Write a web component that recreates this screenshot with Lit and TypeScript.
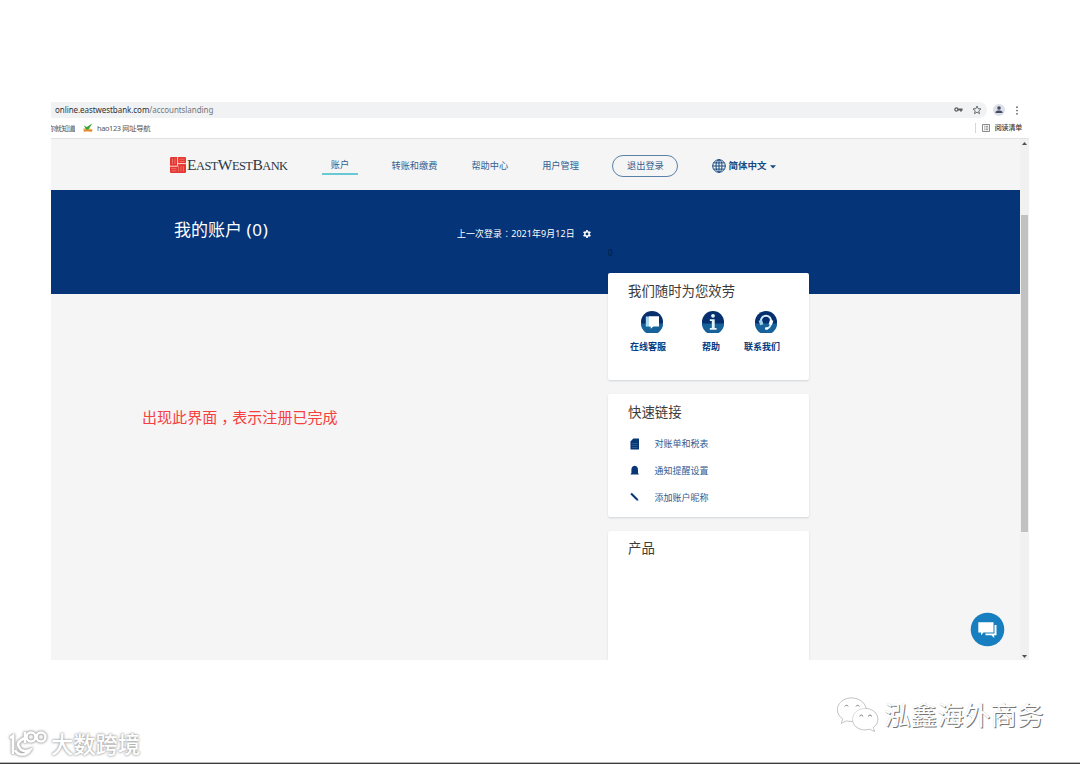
import { LitElement, html, css, svg } from "lit";
import { customElement } from "lit/decorators.js";

const globe = svg`<g fill="none" stroke="#16497f" stroke-width="1"><circle cx="7" cy="7" r="6.3"/><ellipse cx="7" cy="7" rx="3" ry="6.3"/><path d="M7 .7v12.6M.7 7h12.6M1.6 3.9h10.8M1.6 10.1h10.8"/></g>`;

@customElement("app-root")
export class AppRoot extends LitElement {
  static styles = css`
    :host {
      display: block;
      position: relative;
      width: 1080px;
      height: 764px;
      overflow: hidden;
      background: #fff;
      font-family: "Noto Sans", "Noto Sans CJK SC", sans-serif;
    }
    * { box-sizing: border-box; }
    svg { display: block; flex: none; }
    .window {
      margin: 0 0 0 51px;
      padding-top: 102px;
      width: 978px;
      height: 660px;
      display: flex;
      flex-direction: column;
      overflow: hidden;
    }
    .bar { display: flex; height: 16px; flex: none; }
    .address {
      width: 936px;
      height: 15.5px;
      border-radius: 0 8px 8px 0;
      background: #f0f2f4;
      display: flex;
      align-items: center;
      padding: 0 5px 0 4px;
      font-size: 8px;
      line-height: 15px;
      letter-spacing: -0.06px;
      color: #303235;
    }
    .address .path { color: #74777b; flex: 1; }
    .address .key { margin-right: 9px; }
    .avatar { margin: 2px 0 0 6px; }
    .dots { margin: 4px 0 0 10px; }
    .bookmarks {
      height: 20px;
      flex: none;
      display: flex;
      align-items: center;
      font-size: 7.4px;
      line-height: 20px;
      color: #555;
      white-space: nowrap;
    }
    .cut { width: 24px; overflow: hidden; display: flex; justify-content: flex-end; letter-spacing: -0.6px; }
    .hao-icon { margin: 0 4px 0 8px; }
    .hao { flex: 1; letter-spacing: -0.36px; }
    .sep { width: 1px; height: 10px; background: #d4d6d8; margin-right: 6px; }
    .reading { margin: 0 7px 0 5px; font-size: 7px; letter-spacing: -0.2px; color: #333; font-weight: 500; }
    .view {
      flex: 1;
      min-height: 0;
      display: flex;
      border-top: 1px solid #dfe1e3;
    }
    .page { width: 969px; background: #f5f5f5; overflow: hidden; }
    .scroll {
      width: 9px;
      background: #f1f1f1;
      display: flex;
      flex-direction: column;
      align-items: center;
      padding: 3px 0 2px;
    }
    .thumb { width: 7px; height: 317px; margin-top: 70px; background: #c1c1c1; }
    .down { margin-top: auto; }
    .header {
      height: 51px;
      display: flex;
      align-items: center;
      padding: 2px 0 0 119px;
      color: #336090;
      font-size: 9.2px;
      line-height: 14px;
      white-space: nowrap;
    }
    .brand { display: flex; align-items: center; width: 118px; gap: 1px; }
    .brand svg { margin-top: -1px; }
    .name {
      font-family: "Liberation Serif", serif;
      font-size: 12.4px;
      line-height: 16px;
      letter-spacing: -0.52px;
      color: #2c3543;
    }
    .name b { font-weight: 400; font-size: 15.5px; }
    .tab {
      width: 36px;
      height: 16px;
      margin: 2px 33.5px 0 34px;
      text-align: center;
      line-height: 12px;
      border-bottom: 2px solid #68c8d4;
    }
    .n2 { margin-left: 34px; }
    .n3 { margin-left: 34px; }
    .logout {
      width: 66px;
      height: 22px;
      margin-left: 33.5px;
      border: 1px solid #5b80aa;
      border-radius: 11px;
      text-align: center;
      line-height: 20px;
    }
    .globe { margin: 1px 2px 0 34px; }
    .lang { font-weight: 700; font-size: 9.5px; color: #16497f; }
    .caret { margin: 2px 0 0 4px; }
    .banner {
      height: 104px;
      background: #053478;
      color: #fff;
      display: flex;
      align-items: flex-start;
      padding-left: 123px;
    }
    .title { width: 283px; padding-top: 28px; font-size: 17px; line-height: 24px; white-space: nowrap; }
    .title .count { letter-spacing: 0.8px; }
    .last { width: 118px; padding-top: 36px; font-size: 8.9px; line-height: 16px; letter-spacing: 0.15px; white-space: nowrap; }
    .gear { margin: 40px 0 0 8px; }
    .zero { margin: 57px 0 0 17px; font-size: 8px; line-height: 12px; color: #031a45; }
    .wide { font-family: "Noto Sans CJK TC", sans-serif; }
    .comma { padding-left: 4px; margin-right: -4px; }
    .content { display: flex; margin-top: -21px; }
    .note {
      width: 466px;
      margin-left: 91px;
      padding-top: 133px;
      font-size: 15.05px;
      line-height: 22px;
      color: #f6403f;
      white-space: nowrap;
    }
    .side { width: 201px; display: flex; flex-direction: column; gap: 14px; position: relative; }
    .card {
      background: #fff;
      border-radius: 2px;
      box-shadow: 0 1px 2px rgba(30, 60, 80, 0.17);
      padding: 0 20px;
    }
    .card h2 { margin: 0; font-size: 13.4px; line-height: 20px; font-weight: 400; color: #3b3b3b; white-space: nowrap; }
    .help { height: 107px; padding-top: 8px; }
    .links { height: 123px; padding-top: 8px; }
    .products { height: 150px; padding-top: 7px; }
    .actions { display: flex; margin: 10px 0 0 2px; color: #073b80; font-size: 9px; line-height: 14px; font-weight: 700; white-space: nowrap; }
    .action { display: flex; flex-direction: column; gap: 7px; align-items: center; width: 36px; }
    .action.chat svg { margin-left: 8px; }
    .action.info { margin-left: 27px; }
    .action.info svg { margin-left: 3px; }
    .action.phone { margin-left: 15px; }
    .action.phone svg { margin-left: 8px; }
    .row { display: flex; align-items: center; height: 27px; color: #34598f; font-size: 9px; line-height: 14px; white-space: nowrap; }
    .row:first-of-type { margin-top: 8px; }
    .row svg { margin: 0 13.5px 0 0; }
    .fab { position: absolute; left: 970px; top: 612px; }
    .mark { position: absolute; display: flex; align-items: center; white-space: nowrap; color: #fff; }
    .social {
      left: 836px;
      top: 695px;
      gap: 4px;
      font-size: 26.6px;
      line-height: 40px;
      font-weight: 400;
      text-shadow: 1px 1px 0.5px #777, 0 0 1px #d0d0d0;
    }
    .social svg { filter: drop-shadow(0.7px 0.8px 0.4px #999); }
    .corner {
      left: 7px;
      top: 728px;
      gap: 3px;
      font-size: 22.3px;
      line-height: 34px;
      font-weight: 500;
      text-shadow: 0 0 2px #999, 0 0 3px #aaa;
    }
    .corner svg { filter: drop-shadow(0 0 1px #999) drop-shadow(0 0 1px #bbb); }
    .edge { position: absolute; left: 0; top: 762px; width: 1080px; height: 2px; background: #3a3a3a; border-top: 1px solid #b8b8b8; }
  `;

  render() {
    return html`
      <div class="window">
        <div class="bar">
          <div class="address">
            <span>online.eastwestbank.com</span><span class="path">/accountslanding</span>
            <svg class="key" width="9" height="7" viewBox="0 0 9 7"><path d="M4.4 2.5H8.6V4.4H7.8V5.6H6V4.4H4.4A2.2 2.2 0 1 1 4.4 2.5ZM2.4 2.6a.9.9 0 1 0 0 1.8.9.9 0 0 0 0-1.8Z" fill="#5a5d61" fill-rule="evenodd"/></svg>
            <svg width="10" height="10" viewBox="0 0 10 10"><path d="M5 1 6.15 3.7 9 3.9 6.8 5.8 7.5 8.7 5 7.1 2.5 8.7 3.2 5.8 1 3.9 3.85 3.7Z" fill="none" stroke="#5a5d61" stroke-width=".9"/></svg>
          </div>
          <svg class="avatar" width="12" height="12" viewBox="0 0 12 12"><circle cx="6" cy="6" r="6" fill="#dde0e9"/><circle cx="6" cy="4" r="1.8" fill="#454b62"/><path d="M2.5 9V8C2.5 5.9 9.5 5.9 9.5 8V9Z" fill="#454b62"/></svg>
          <svg class="dots" width="4" height="10" viewBox="0 0 4 10"><g fill="#55585c"><circle cx="2" cy="1.2" r=".85"/><circle cx="2" cy="4.5" r=".85"/><circle cx="2" cy="7.8" r=".85"/></g></svg>
        </div>
        <div class="bookmarks">
          <span class="cut">你就知道</span>
          <svg class="hao-icon" width="10" height="10" viewBox="0 0 10 10"><path d="M.2 5.6Q5 4.4 9.6 6.4L9 9.2Q5 7.8 .8 9Z" fill="#efb04b"/><path d="M.8 2.6 3.8 4 9.4.2 5.4 6.6 3.2 6.8Z" fill="#35a53a"/><path d="M1 7.5H9" stroke="#e66b3b" stroke-width=".7"/></svg>
          <span class="hao">hao123 网址导航</span>
          <span class="sep"></span>
          <svg width="8" height="8" viewBox="0 0 8 8"><path d="M.5.5h7v7h-7ZM2 2.3h.8M3.5 2.3h2.7M2 4h.8M3.5 4h2.7M2 5.7h.8M3.5 5.7h2.7" fill="none" stroke="#696c70" stroke-width=".8"/></svg>
          <span class="reading">阅读清单</span>
        </div>
        <div class="view">
          <div class="page">
            <div class="header">
              <div class="brand">
                <svg width="16" height="16" viewBox="0 0 16 16"><rect width="16" height="16" rx="1.2" fill="#e5362f"/><path d="M7.6 0V9M0 9.2H7.6M7.6 6.6H16" stroke="#fdecea" stroke-width=".9" fill="none"/><path d="M2.5 1.5V7M5 1.5V7M9.5 2.2H14.5M9.5 4.4H14.5M1.5 11.6H6.5M1.5 13.8H6.5M8.6 9V14.5M11 9V14.5M13.4 9V14.5" stroke="#f29b96" stroke-width=".6"/></svg>
                <span class="name"><b>E</b>AST<b>W</b>EST<b>B</b>ANK</span>
              </div>
              <span class="tab">账户</span>
              <span>转账和缴费</span>
              <span class="n2">帮助中心</span>
              <span class="n3">用户管理</span>
              <span class="logout">退出登录</span>
              <svg class="globe" width="14" height="14" viewBox="0 0 14 14">${globe}</svg>
              <span class="lang">简体中文</span>
              <svg class="caret" width="6" height="4" viewBox="0 0 6 4"><path d="M0 .3H6L3 3.5Z" fill="#16497f"/></svg>
            </div>
            <div class="banner">
              <span class="title">我的账户 <span class="count">(0)</span></span>
              <span class="last">上一次登录<span class="wide">：</span>2021年9月12日</span>
              <svg class="gear" width="8" height="8" viewBox="0 0 8 8"><circle cx="4" cy="4" r="2.2" fill="none" stroke="#fff" stroke-width="1.5"/><path d="M4 0V1.6M4 6.4V8M.55 2 1.9 2.8M6.1 5.2 7.45 6M.55 6 1.9 5.2M6.1 2.8 7.45 2" stroke="#fff" stroke-width="1.7"/></svg>
              <span class="zero">0</span>
            </div>
            <div class="content">
              <div class="note">出现此界面<span class="comma">，</span>表示注册已完成</div>
              <div class="side">
                <section class="card help">
                  <h2>我们随时为您效劳</h2>
                  <div class="actions">
                    <div class="action chat">
                      <svg width="22" height="22" viewBox="0 0 22 22"><circle cx="11" cy="11" r="11" fill="#062f6e"/><path d="M0 12.5H22A11 11 0 0 1 0 12.5Z" fill="#17629a"/><path d="M4.8 5.5H8.6V15.6H4.8Z" fill="#a9d8ea"/><path d="M8 5.2H18V15.4H12.4L9.7 17.8V15.4H8Z" fill="#fff"/></svg>
                      <span>在线客服</span>
                    </div>
                    <div class="action info">
                      <svg width="22" height="22" viewBox="0 0 22 22"><circle cx="11" cy="11" r="11" fill="#062f6e"/><path d="M0 12.5H22A11 11 0 0 1 0 12.5Z" fill="#17629a"/><circle cx="11" cy="4.8" r="1.9" fill="#e4f4fa"/><path d="M7.8 8.2H12.7V17H14.6V18.8H7.8V17H9.8V10H7.8Z" fill="#e4f4fa"/></svg>
                      <span>帮助</span>
                    </div>
                    <div class="action phone">
                      <svg width="22" height="22" viewBox="0 0 22 22"><circle cx="11" cy="11" r="11" fill="#062f6e"/><path d="M0 12.5H22A11 11 0 0 1 0 12.5Z" fill="#17629a"/><path d="M6 11.5C4.8 2.5 17.2 2.5 16 11.5C15.8 15 14.5 17 11.8 17.5" fill="none" stroke="#d8eef7" stroke-width="1.9"/><path d="M3.6 9.8 7 8.8 8.4 13.2 5.2 14.2Z" fill="#9fd3e8"/><path d="M18.4 9.8 15 8.8 13.6 13.2 16.8 14.2Z" fill="#fff"/><rect x="10" y="16.2" width="3" height="2.6" rx="1" fill="#fff"/></svg>
                      <span>联系我们</span>
                    </div>
                  </div>
                </section>
                <section class="card links">
                  <h2>快速链接</h2>
                  <div class="row"><svg width="13" height="12" viewBox="0 0 13 12"><path d="M5.3.4H11V11.6H2.5V3.4Z" fill="#083776"/><path d="M4 5.5H9.5M4 7.5H9.5M4 9.5H9.5" stroke="#6486b4" stroke-width=".4"/></svg><span>对账单和税表</span></div>
                  <div class="row"><svg width="13" height="12" viewBox="0 0 13 12"><path d="M6.7.8C9.4 1.2 10 3 10 5.2V8L11 9.6H2.4L3.4 8V5.2C3.4 3 4 1.2 6.7.8Z" fill="#083776"/></svg><span>通知提醒设置</span></div>
                  <div class="row"><svg width="13" height="12" viewBox="0 0 13 12"><path d="M3.1 1.4 9.1 7.4" stroke="#083776" stroke-width="2.1"/><path d="M8.2 8.2 10.4 8.7 10 6.6Z" fill="#083776"/></svg><span>添加账户昵称</span></div>
                </section>
                <section class="card products"><h2>产品</h2></section>
              </div>
            </div>
          </div>
          <div class="scroll">
            <svg width="5" height="3" viewBox="0 0 5 3"><path d="M0 3 2.5 0 5 3Z" fill="#505050"/></svg>
            <div class="thumb"></div>
            <svg class="down" width="5" height="3" viewBox="0 0 5 3"><path d="M0 0H5L2.5 3Z" fill="#505050"/></svg>
          </div>
        </div>
      </div>
      <svg class="fab" width="35" height="35" viewBox="0 0 35 35"><circle cx="17.5" cy="17.5" r="16.8" fill="#177ebf"/><path d="M24.5 13H26.5V23.3H24.2V26L21.4 23.3H15.5V21.5H24.5Z" fill="#fff"/><path d="M8.3 10.2H23.5V20.5H13.5L11 23.2V20.5H8.3Z" fill="#fff"/></svg>
      <div class="mark social">
        <svg width="44" height="38" viewBox="0 0 44 38"><g fill="#fff" stroke="#c4c4c4" stroke-width=".6"><path d="M15.5 2C7.5 2 1.5 7.2 1.5 13.8C1.5 17.6 3.6 20.8 6.8 23L5.4 27.2 10.3 24.7C12 25.2 13.8 25.4 16 25.3L30 12C28.7 6.3 22.7 2 15.5 2Z"/><path d="M29 12.5C21.8 12.5 16.6 17.2 16.6 23.2C16.6 29.2 21.8 33.8 29 33.8C30.6 33.8 32.2 33.5 33.7 33L38.5 35.5 37.2 31.6C40 29.5 41.8 26.7 41.8 23.2C41.8 17.2 36.2 12.5 29 12.5Z"/></g><path d="M8.8 10.5A1.8 1.8 0 0 1 12.2 10.5M20 10.5A1.8 1.8 0 0 1 23.4 10.5M23.8 20.5A1.5 1.5 0 0 1 26.8 20.5M32.5 20.5A1.5 1.5 0 0 1 35.5 20.5" fill="none" stroke="#777" stroke-width=".9"/></svg>
        <span>泓鑫海外商务</span>
      </div>
      <div class="mark corner">
        <svg width="41" height="30" viewBox="0 0 41 30"><g fill="none" stroke="#fff" stroke-width="2.6"><path d="M3 8 6 6V24"/><path d="M18 8C11 11 10 14 12 17C14 21 18 22 23 20C20 25 12 27 8 20"/><circle cx="24" cy="7" r="4.5"/><circle cx="34" cy="7" r="4.5"/><path d="M18 2V13"/></g></svg>
        <span>大数跨境</span>
      </div>
      <div class="edge"></div>
    `;
  }
}
